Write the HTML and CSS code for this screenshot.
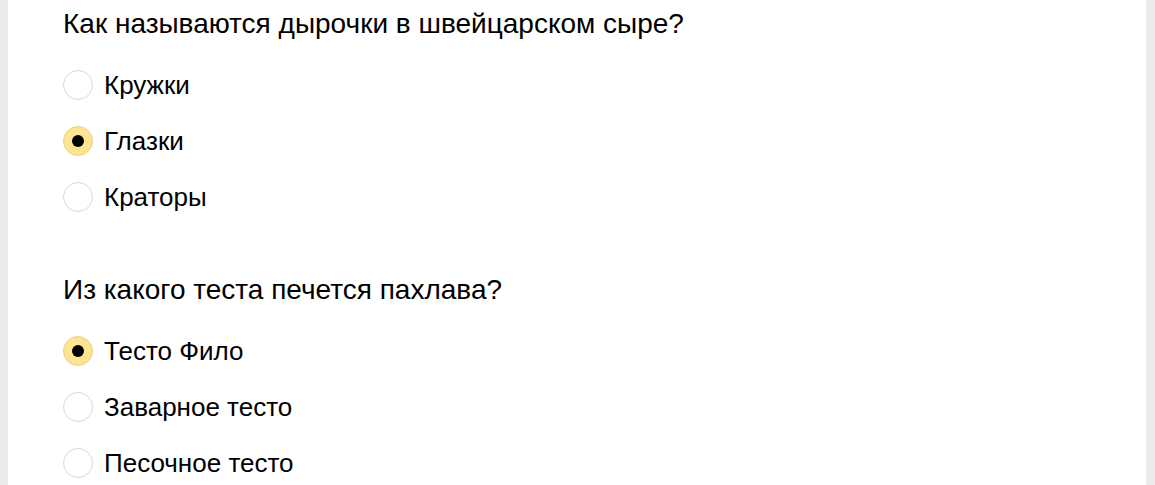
FILE: index.html
```html
<!DOCTYPE html>
<html lang="ru">
<head>
<meta charset="utf-8">
<link rel="stylesheet" href="styles.css">
</head>
<body>
<div class="card">
  <div class="question">
    <div class="q-title">Как называются дырочки в швейцарском сыре?</div>
    <div class="options">
      <label class="option"><span class="radio"></span><span class="label">Кружки</span></label>
      <label class="option"><span class="radio checked"></span><span class="label">Глазки</span></label>
      <label class="option"><span class="radio"></span><span class="label">Краторы</span></label>
    </div>
  </div>
  <div class="question">
    <div class="q-title">Из какого теста печется пахлава?</div>
    <div class="options">
      <label class="option"><span class="radio checked"></span><span class="label">Тесто Фило</span></label>
      <label class="option"><span class="radio"></span><span class="label">Заварное тесто</span></label>
      <label class="option"><span class="radio"></span><span class="label">Песочное тесто</span></label>
    </div>
  </div>
</div>
</body>
</html>
```
FILE: styles.css
```css
html, body {
  margin: 0;
  padding: 0;
  background: #ebebeb;
  height: 100%;
}
body {
  font-family: "Liberation Sans", Arial, sans-serif;
  color: #000;
  overflow: hidden;
}
.card {
  margin: 0 9px 0 8px;
  background: #fff;
  min-height: 100%;
  padding: 4px 0 0 55px;
  box-sizing: border-box;
}
.question {
  display: flex;
  flex-direction: column;
  margin-bottom: 58px;
}
.q-title {
  font-size: 28px;
  line-height: 40px;
}
.options {
  display: flex;
  flex-direction: column;
  gap: 26px;
  margin-top: 26px;
}
.option {
  display: flex;
  align-items: center;
  gap: 11px;
  font-size: 26px;
  height: 30px;
}
.radio {
  width: 30px;
  height: 30px;
  box-sizing: border-box;
  border: 1px solid #d9d9d9;
  border-radius: 50%;
  background: #fff;
  display: flex;
  align-items: center;
  justify-content: center;
  flex: none;
}
.radio.checked {
  background: #fce491;
  border-color: #e8d18a;
}
.radio.checked::after {
  content: "";
  width: 12px;
  height: 12px;
  border-radius: 50%;
  background: #000;
}
```
